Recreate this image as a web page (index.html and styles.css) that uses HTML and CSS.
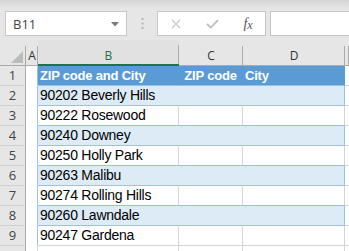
FILE: index.html
```html
<!DOCTYPE html>
<html>
<head>
	<title>ZIP codes</title>
	<link rel="stylesheet" href="styles.css">
</head>
<body>
	<div class="toolbar">
		<div class="nameBox">
			<span>B11</span>
			<svg class="caret" width="8" height="5" viewBox="0 0 8 5"><polygon points="0,0 8,0 4,4.5" fill="#7a7a7a"/></svg>
		</div>
		<div class="dots">
			<svg width="3" height="11" viewBox="0 0 3 11"><rect x="0.5" y="0" width="2" height="2" fill="#b4b4b4"/><rect x="0.5" y="4.5" width="2" height="2" fill="#b4b4b4"/><rect x="0.5" y="9" width="2" height="2" fill="#b4b4b4"/></svg>
		</div>
		<div class="fxBox">
			<span class="fxBtn"><svg width="10" height="10" viewBox="0 0 10 10"><path d="M1 1 L9 9 M9 1 L1 9" stroke="#c8c8c8" stroke-width="1.3"/></svg></span>
			<span class="fxBtn"><svg width="13" height="10" viewBox="0 0 13 10"><path d="M1 5 L4.8 8.6 L12 1.2" stroke="#bdbdbd" stroke-width="1.8" fill="none"/></svg></span>
			<span class="fxBtn fxText"><i>f</i><i class="small">x</i></span>
		</div>
		<div class="formula"></div>
	</div>

	<div class="sheet">
		<!-- column headers -->
		<div class="corner"><svg width="26" height="26" viewBox="0 0 26 26"><polygon points="23,11 23,23 11,23" fill="#bcbcbc"/></svg></div>
		<div class="colHead">A</div>
		<div class="colHead selected">B</div>
		<div class="colHead">C</div>
		<div class="colHead">D</div>
		<div class="colHead"></div>

		<div class="rowHead">1</div>
		<div class="cell colA"></div>
		<div class="cell tHead">ZIP code and City</div>
		<div class="cell tHead center">ZIP code</div>
		<div class="cell tHead last">City</div>
		<div class="cell colE"></div>

		<div class="rowHead">2</div>
		<div class="cell colA"></div>
		<div class="cell band">90202 Beverly Hills</div>
		<div class="cell band"></div>
		<div class="cell band last"></div>
		<div class="cell colE"></div>

		<div class="rowHead">3</div>
		<div class="cell colA"></div>
		<div class="cell plain">90222 Rosewood</div>
		<div class="cell plain"></div>
		<div class="cell plain"></div>
		<div class="cell colE"></div>

		<div class="rowHead">4</div>
		<div class="cell colA"></div>
		<div class="cell band">90240 Downey</div>
		<div class="cell band"></div>
		<div class="cell band last"></div>
		<div class="cell colE"></div>

		<div class="rowHead">5</div>
		<div class="cell colA"></div>
		<div class="cell plain">90250 Holly Park</div>
		<div class="cell plain"></div>
		<div class="cell plain"></div>
		<div class="cell colE"></div>

		<div class="rowHead">6</div>
		<div class="cell colA"></div>
		<div class="cell band">90263 Malibu</div>
		<div class="cell band"></div>
		<div class="cell band last"></div>
		<div class="cell colE"></div>

		<div class="rowHead">7</div>
		<div class="cell colA"></div>
		<div class="cell plain">90274 Rolling Hills</div>
		<div class="cell plain"></div>
		<div class="cell plain"></div>
		<div class="cell colE"></div>

		<div class="rowHead">8</div>
		<div class="cell colA"></div>
		<div class="cell band">90260 Lawndale</div>
		<div class="cell band"></div>
		<div class="cell band last"></div>
		<div class="cell colE"></div>

		<div class="rowHead">9</div>
		<div class="cell colA"></div>
		<div class="cell plain end">90247 Gardena</div>
		<div class="cell plain end"></div>
		<div class="cell plain end"></div>
		<div class="cell colE"></div>

		<!-- row 10, only its top edge is on screen -->
		<div class="rowHead"></div>
		<div class="cell colA out"></div>
		<div class="cell out"></div>
		<div class="cell out"></div>
		<div class="cell out"></div>
		<div class="cell colE"></div>
	</div>
</body>
</html>
```

FILE: styles.css
```css
:root {
	--chrome: #e6e6e6;
	--grid: #d4d4d4;
	--headLine: #ababab;
	--tableBlue: #5b9bd5;
	--bandBlue: #ddebf7;
	--bandLine: #9bc2e6;
	--excelGreen: #217346;
}

* {
	box-sizing: border-box;
}

body {
	margin: 0;
	overflow: hidden;
	background-color: var(--chrome);
}

/* formula bar */

.toolbar {
	height: 40px;
	display: flex;
	align-items: flex-start;
	padding: 11px 0 0 5px;
	background: linear-gradient(#d5d5d5, var(--chrome) 9px);
}

.nameBox {
	width: 122px;
	height: 25px;
	display: flex;
	align-items: center;
	justify-content: space-between;
	padding: 0 7px 0 7px;
	background-color: #fff;
	border: 1px solid #c6c6c6;
	font-family: "Open Sans", sans-serif;
	font-size: 13px;
	color: #444;
}

.nameBox .caret {
	margin-top: 1px;
}

.dots {
	width: 30px;
	height: 25px;
	display: flex;
	align-items: center;
	justify-content: center;
}

.fxBox {
	width: 109px;
	height: 25px;
	display: grid;
	grid-template-columns: 36px 36px 36px;
	background-color: #fff;
	border: 1px solid #c6c6c6;
}

.fxBtn {
	display: flex;
	align-items: center;
	justify-content: center;
}

.fxText {
	font-family: "Liberation Serif", serif;
	font-size: 14px;
	color: #555;
}

.fxText .small {
	font-size: 12px;
	margin-top: 3px;
}

.formula {
	flex: 1;
	height: 25px;
	margin-left: 4px;
	background-color: #fff;
	border: 1px solid #c6c6c6;
	border-right: none;
}

/* sheet grid */

.sheet {
	display: grid;
	grid-template-columns: 26px 12px 141px 64px 102px 1fr;
	grid-template-rows: 26px;
	grid-auto-rows: 20px;
}

.corner,
.colHead {
	background: linear-gradient(var(--headLine), var(--headLine)) no-repeat right bottom / 1px 19px, var(--chrome);
	border-bottom: 1px solid var(--headLine);
}

.corner svg {
	display: block;
}

.colHead {
	padding-top: 8px;
	line-height: 16px;
	text-align: center;
	font-family: "Open Sans", sans-serif;
	font-size: 12px;
	color: #333;
}

.colHead.selected {
	background-color: #e1e1e1;
	border-bottom: 2px solid var(--excelGreen);
	color: var(--excelGreen);
}

.rowHead {
	background-color: var(--chrome);
	border-right: 1px solid var(--headLine);
	border-bottom: 1px solid #d0d0d0;
	text-align: center;
	line-height: 19px;
	font-family: "Open Sans", sans-serif;
	font-size: 13px;
	color: #444;
}

.cell {
	background-color: #fff;
	border-right: 1px solid var(--grid);
	border-bottom: 1px solid var(--grid);
	padding-left: 2px;
	white-space: nowrap;
	overflow: hidden;
	line-height: 19px;
	font-family: "Liberation Sans", Arial, sans-serif;
	font-size: 14px;
	letter-spacing: -0.25px;
	color: #000;
}

.colA {
	border-right-color: var(--bandLine);
	border-bottom-color: #fff;
}

.colA.out {
	border-right-color: var(--grid);
}

.tHead {
	background-color: var(--tableBlue);
	border-right-color: var(--tableBlue);
	border-bottom-color: var(--bandLine);
	font-size: 13px;
	font-weight: bold;
	letter-spacing: -0.2px;
	color: #fff;
}

.tHead.center {
	text-align: center;
	padding-left: 0;
}

.band {
	background-color: var(--bandBlue);
	border-right-color: var(--bandBlue);
	border-bottom-color: var(--bandLine);
}

.band.last {
	border-right-color: var(--bandLine);
}

.plain {
	border-bottom-color: var(--bandLine);
}

.plain.end {
	border-bottom-color: var(--grid);
}

.colE {
	border-right: none;
}
```
